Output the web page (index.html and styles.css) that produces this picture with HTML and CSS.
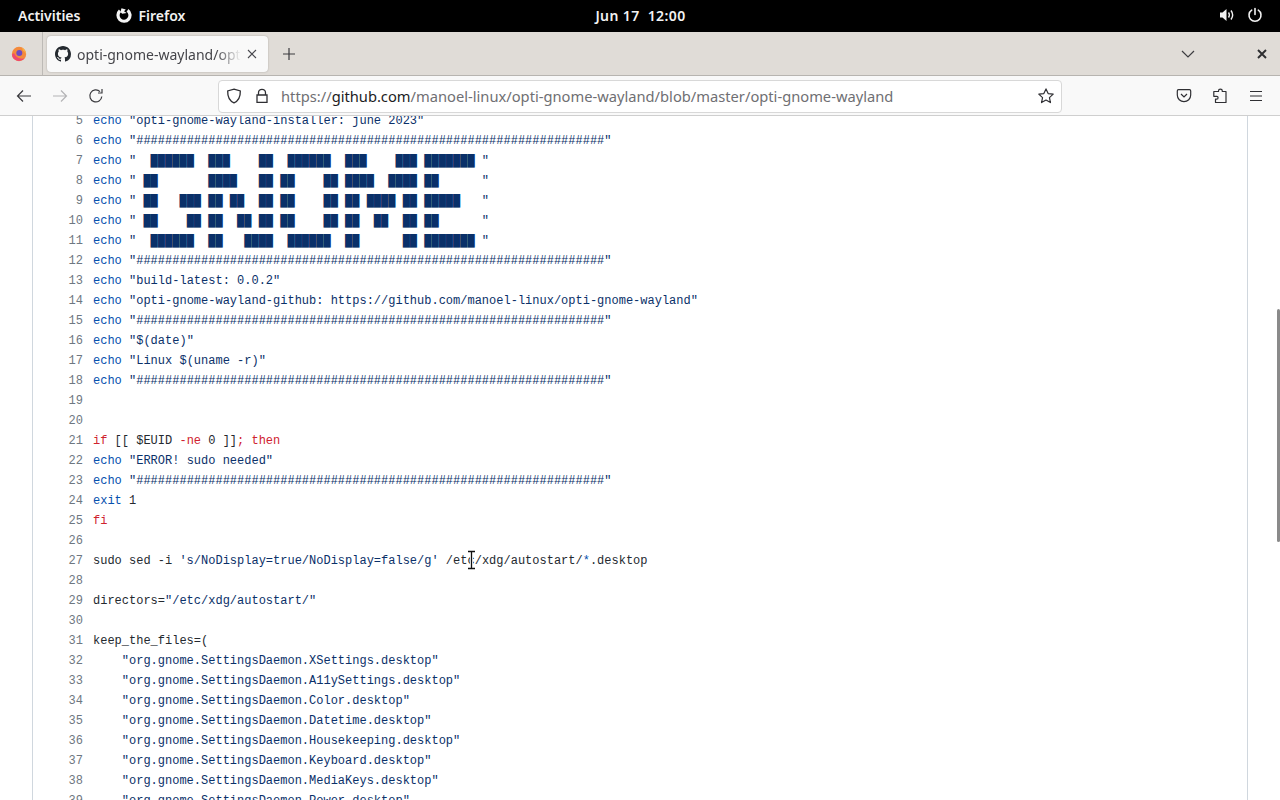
FILE: index.html
```html
<!DOCTYPE html>
<html lang="en">
<head>
<meta charset="utf-8">
<title>opti-gnome-wayland</title>
<link rel="stylesheet" href="styles.css">
</head>
<body>
<header class="topbar">
  <div class="top-left">
    <span class="top-item">Activities</span>
    <span class="top-item app">
      <svg class="ff-mono" viewBox="0 0 16 16" width="16" height="16"><path fill="none" stroke="#f4f4f4" stroke-width="3.200" d="M4 3.800A6 6 0 1 0 11.500 3.400"/><path fill="#f4f4f4" d="M5.500 1.200l4.300 1.300-1.800 1.700 2.600 1.800-4.400.8-1.800-1.900z"/></svg>
      Firefox
    </span>
  </div>
  <div class="clock">Jun 17&nbsp;&nbsp;12:00</div>
  <div class="top-right">
    <svg viewBox="0 0 16 16" width="16" height="16"><path fill="#f2f2f2" d="M1 5.500h2.500L7.500 2v12L3.500 10.500H1z"/><path fill="none" stroke="#f2f2f2" stroke-width="1.400" d="M9.500 5.500c1 1.500 1 3.500 0 5M12 3.500c2 2.700 2 6.300 0 9"/></svg>
    <svg viewBox="0 0 16 16" width="16" height="16"><path fill="none" stroke="#f2f2f2" stroke-width="1.600" stroke-linecap="round" d="M8 1.500v6M4.700 3.200a6 6 0 1 0 6.600 0"/></svg>
  </div>
</header>

<div class="tabbar">
  <div class="ff-view">
    <svg viewBox="0 0 16 16" width="16" height="16"><circle cx="8" cy="8" r="7.200" fill="#f48a3c"/><path fill="#ef4a6e" d="M1 8.500a7.200 7.200 0 0 0 12.800 3.800C9.500 13.500 5 12 3 7z"/><path fill="#fbb040" d="M11 1.500c2.800 1.500 4.200 4 4 6.800-.6-2-1.800-3-3-3.500z"/><circle cx="8.300" cy="6.900" r="3" fill="#6f4bc0"/></svg>
  </div>
  <div class="tab">
    <svg class="gh" viewBox="0 0 16 16" width="16" height="16"><path fill="#24292f" d="M8 0C3.580 0 0 3.580 0 8c0 3.540 2.290 6.530 5.470 7.590.4.070.55-.17.550-.38 0-.19-.01-.82-.01-1.490-2.010.370-2.530-.49-2.690-.94-.09-.23-.48-.94-.82-1.130-.28-.15-.68-.52-.01-.53.630-.01 1.080.58 1.230.82.720 1.210 1.870.870 2.330.660.070-.52.280-.87.510-1.070-1.780-.2-3.640-.89-3.640-3.950 0-.87.310-1.590.820-2.150-.08-.2-.36-1.020.080-2.120 0 0 .67-.21 2.200.820.640-.18 1.320-.27 2-.27.680 0 1.360.09 2 .27 1.530-1.040 2.200-.82 2.200-.82.440 1.100.160 1.920.080 2.120.510.560.820 1.270.820 2.150 0 3.070-1.870 3.750-3.650 3.950.290.250.540.730.540 1.480 0 1.070-.01 1.930-.01 2.200 0 .210.150.460.550.380A8.013 8.013 0 0 0 16 8c0-4.420-3.580-8-8-8z"/></svg>
    <span class="tab-title">opti-gnome-wayland/opti-gnome-wayland</span>
    <svg class="tab-x" viewBox="0 0 10 10" width="10" height="10"><path stroke="#4a4a4f" stroke-width="1.100" d="M1 1l8 8M9 1l-8 8"/></svg>
  </div>
  <svg class="plus" viewBox="0 0 12 12" width="12" height="12"><path stroke="#3a3a3e" stroke-width="1.200" d="M6 0v12M0 6h12"/></svg>
  <div class="tabbar-spacer"></div>
  <svg class="chev" viewBox="0 0 14 8" width="14" height="8"><path fill="none" stroke="#3d3d40" stroke-width="1.200" d="M1 1l6 6 6-6"/></svg>
  <svg class="win-x" viewBox="0 0 10 10" width="10" height="10"><path stroke="#2e2e30" stroke-width="1.900" d="M1 1l8 8M9 1l-8 8"/></svg>
</div>

<nav class="navbar">
  <div class="nav-btns">
    <svg viewBox="0 0 16 16" width="16" height="16"><path fill="none" stroke="#3b3b3f" stroke-width="1.200" d="M15 8H1.500M7 2.500L1.500 8 7 13.500"/></svg>
    <svg viewBox="0 0 16 16" width="16" height="16"><path fill="none" stroke="#b4b4b6" stroke-width="1.200" d="M1 8h13.500M9 2.500L14.500 8 9 13.500"/></svg>
    <svg viewBox="0 0 16 16" width="16" height="16"><path fill="none" stroke="#3b3b3f" stroke-width="1.200" d="M13.800 8.500A6 6 0 1 1 12 3.600M14 1v4h-4"/></svg>
  </div>
  <div class="urlbar">
    <svg viewBox="0 0 16 16" width="16" height="16"><path fill="none" stroke="#2f2f33" stroke-width="1.300" d="M8 1.200l6.300 1.700c.2 5.500-1.500 9.700-6.300 11.900C3.200 12.600 1.500 8.400 1.700 2.900z"/></svg>
    <svg viewBox="0 0 16 16" width="16" height="16"><path fill="none" stroke="#2f2f33" stroke-width="1.300" d="M4.500 7V4.800a3.500 3.500 0 0 1 7 0V7M3 7h10v7.300H3z"/></svg>
    <div class="url"><span class="dim">https://</span>github.com<span class="dim">/manoel-linux/opti-gnome-wayland/blob/master/opti-gnome-wayland</span></div>
    <svg class="star" viewBox="0 0 16 16" width="16" height="16"><path fill="none" stroke="#2f2f33" stroke-width="1.200" stroke-linejoin="round" d="M8 .9l2.150 4.650 5.050.6-3.750 3.450 1 5L8 12.100l-4.450 2.500 1-5L.8 6.150l5.050-.6z"/></svg>
  </div>
  <div class="nav-tools">
    <svg viewBox="0 0 16 16" width="16" height="16"><path fill="none" stroke="#2f2f33" stroke-width="1.200" d="M2.500 1.700h11c.7 0 1.200.5 1.200 1.200V7a6.700 6.700 0 0 1-13.400 0V2.900c0-.7.500-1.200 1.200-1.200zM5 6l3 3 3-3"/></svg>
    <svg viewBox="0 0 16 16" width="16" height="16"><path fill="none" stroke="#2f2f33" stroke-width="1.200" stroke-linejoin="round" d="M6.500 3.500V3c0-2.400 3.800-2.400 3.800 0v.5h3.700v11H3.500v-3.300h1.300c1.700 0 1.700-2.900 0-2.900H1.800V3.500z"/></svg>
    <svg viewBox="0 0 16 16" width="16" height="16"><path stroke="#2f2f33" stroke-width="1.200" d="M2 3.500h12M2 8h12M2 12.500h12"/></svg>
  </div>
</nav>

<main class="page">
  <div class="file-box">
    <table class="code">
      <tbody>
        <tr><td class="num">5</td><td class="line"><span class="k">echo</span> <span class="s">"opti-gnome-wayland-installer: june 2023"</span></td></tr>
        <tr><td class="num">6</td><td class="line"><span class="k">echo</span> <span class="s">"#################################################################"</span></td></tr>
        <tr><td class="num">7</td><td class="line"><span class="k">echo</span> <span class="s">"  ██████  ███    ██  ██████  ███    ███ ███████ "</span></td></tr>
        <tr><td class="num">8</td><td class="line"><span class="k">echo</span> <span class="s">" ██       ████   ██ ██    ██ ████  ████ ██      "</span></td></tr>
        <tr><td class="num">9</td><td class="line"><span class="k">echo</span> <span class="s">" ██   ███ ██ ██  ██ ██    ██ ██ ████ ██ █████   "</span></td></tr>
        <tr><td class="num">10</td><td class="line"><span class="k">echo</span> <span class="s">" ██    ██ ██  ██ ██ ██    ██ ██  ██  ██ ██      "</span></td></tr>
        <tr><td class="num">11</td><td class="line"><span class="k">echo</span> <span class="s">"  ██████  ██   ████  ██████  ██      ██ ███████ "</span></td></tr>
        <tr><td class="num">12</td><td class="line"><span class="k">echo</span> <span class="s">"#################################################################"</span></td></tr>
        <tr><td class="num">13</td><td class="line"><span class="k">echo</span> <span class="s">"build-latest: 0.0.2"</span></td></tr>
        <tr><td class="num">14</td><td class="line"><span class="k">echo</span> <span class="s">"opti-gnome-wayland-github: https://github.com/manoel-linux/opti-gnome-wayland"</span></td></tr>
        <tr><td class="num">15</td><td class="line"><span class="k">echo</span> <span class="s">"#################################################################"</span></td></tr>
        <tr><td class="num">16</td><td class="line"><span class="k">echo</span> <span class="s">"$(date)"</span></td></tr>
        <tr><td class="num">17</td><td class="line"><span class="k">echo</span> <span class="s">"Linux $(uname -r)"</span></td></tr>
        <tr><td class="num">18</td><td class="line"><span class="k">echo</span> <span class="s">"#################################################################"</span></td></tr>
        <tr><td class="num">19</td><td class="line"></td></tr>
        <tr><td class="num">20</td><td class="line"></td></tr>
        <tr><td class="num">21</td><td class="line"><span class="r">if</span> [[ <span class="p">$EUID</span> <span class="r">-ne</span> 0 ]]<span class="r">;</span> <span class="r">then</span></td></tr>
        <tr><td class="num">22</td><td class="line"><span class="k">echo</span> <span class="s">"ERROR! sudo needed"</span></td></tr>
        <tr><td class="num">23</td><td class="line"><span class="k">echo</span> <span class="s">"#################################################################"</span></td></tr>
        <tr><td class="num">24</td><td class="line"><span class="k">exit</span> 1</td></tr>
        <tr><td class="num">25</td><td class="line"><span class="r">fi</span></td></tr>
        <tr><td class="num">26</td><td class="line"></td></tr>
        <tr><td class="num">27</td><td class="line">sudo sed -i <span class="s">'s/NoDisplay=true/NoDisplay=false/g'</span> /etc/xdg/autostart/<span class="k">*</span>.desktop</td></tr>
        <tr><td class="num">28</td><td class="line"></td></tr>
        <tr><td class="num">29</td><td class="line">directors=<span class="s">"/etc/xdg/autostart/"</span></td></tr>
        <tr><td class="num">30</td><td class="line"></td></tr>
        <tr><td class="num">31</td><td class="line">keep_the_files=(</td></tr>
        <tr><td class="num">32</td><td class="line">    <span class="s">"org.gnome.SettingsDaemon.XSettings.desktop"</span></td></tr>
        <tr><td class="num">33</td><td class="line">    <span class="s">"org.gnome.SettingsDaemon.A11ySettings.desktop"</span></td></tr>
        <tr><td class="num">34</td><td class="line">    <span class="s">"org.gnome.SettingsDaemon.Color.desktop"</span></td></tr>
        <tr><td class="num">35</td><td class="line">    <span class="s">"org.gnome.SettingsDaemon.Datetime.desktop"</span></td></tr>
        <tr><td class="num">36</td><td class="line">    <span class="s">"org.gnome.SettingsDaemon.Housekeeping.desktop"</span></td></tr>
        <tr><td class="num">37</td><td class="line">    <span class="s">"org.gnome.SettingsDaemon.Keyboard.desktop"</span></td></tr>
        <tr><td class="num">38</td><td class="line">    <span class="s">"org.gnome.SettingsDaemon.MediaKeys.desktop"</span></td></tr>
        <tr><td class="num">39</td><td class="line">    <span class="s">"org.gnome.SettingsDaemon.Power.desktop"</span></td></tr>
      </tbody>
    </table>
  </div>
  <div class="scroll-thumb"></div>
  <svg class="ibeam" viewBox="0 0 9 20" width="9" height="20"><path fill="none" stroke="#fff" stroke-width="3" d="M1 1h7M4.500 1v18M1 19h7"/><path fill="none" stroke="#111" stroke-width="1.300" d="M1 1.500h7M4.500 1.500v17M1 18.500h7"/></svg>
</main>
</body>
</html>
```
FILE: styles.css
```css
* { box-sizing: border-box; }
html, body { margin: 0; padding: 0; height: 800px; overflow: hidden; background: #fff; }
body { display: flex; flex-direction: column; font-family: "Noto Sans", "Open Sans", sans-serif; }
svg { display: block; flex: none; }

.topbar {
  height: 32px; flex: none; background: #000; color: #f2f2f2;
  display: grid; grid-template-columns: 1fr auto 1fr; align-items: center;
  font-size: 14px; font-weight: 600; padding: 0 17px 2px 18px;
}
.top-left { display: flex; align-items: center; gap: 36px; }
.top-item.app { display: flex; align-items: center; gap: 6px; }
.clock { letter-spacing: .4px; }
.top-right { display: flex; justify-content: flex-end; align-items: center; gap: 12px; padding-right: 0; }

.tabbar {
  height: 44px; flex: none; background: #e0dcd7; border-bottom: 1px solid #b7b4b0;
  display: flex; align-items: center;
}
.ff-view {
  width: 43px; height: 43px; display: flex; align-items: center; justify-content: center;
  border-right: 1px solid #bdbab6; padding-right: 5px;
}
.tab {
  margin-left: 4px; width: 221px; height: 36px; background: #f9f9f9; border-radius: 4px;
  box-shadow: 0 0 2px rgba(0,0,0,.25);
  display: flex; align-items: center; padding: 0 11px 0 8px; gap: 6px; font-size: 14px; color: #45454a;
}
.tab-title {
  flex: 1; white-space: nowrap; overflow: hidden; padding-top: 1px;
  -webkit-mask-image: linear-gradient(to right, #000 85%, transparent 100%);
  mask-image: linear-gradient(to right, #000 85%, transparent 100%);
}
.plus { margin-left: 15px; }
.tabbar-spacer { flex: 1; }
.chev { margin-right: 62px; }
.win-x { margin-right: 13px; }

.navbar {
  height: 40px; flex: none; background: #f9f9f9; border-bottom: 1px solid #cfcfcf;
  display: flex; align-items: center; padding-top: 1px;
}
.nav-btns { display: flex; align-items: center; gap: 20px; padding-left: 16px; width: 218px; }
.urlbar {
  width: 844px; height: 33px; background: #fff; border: 1px solid #d8d8d8; border-radius: 4px;
  display: flex; align-items: center; padding: 0 7px 0 7px; gap: 12px;
}
.url { flex: 1; font-size: 14.7px; color: #1c1c1e; white-space: nowrap; overflow: hidden; margin-left: -1px; }
.dim { color: #6f6f73; }
.nav-tools { display: flex; align-items: center; gap: 20px; padding-left: 114px; }

.page { flex: 1; position: relative; overflow: hidden; background: #fff; padding: 0 32px; min-height: 0; }
.file-box { width: 1216px; height: 800px; margin-top: -5px; border: 1px solid #d0d7de; border-width: 0 1px; }
.code { border-collapse: collapse; font-family: "Liberation Mono", monospace; font-size: 12px; line-height: 20px; }
.code td { padding: 0; height: 20px; white-space: pre; }
.num { width: 60px; text-align: right; color: #6e7781; }
.line { color: #24292f; }
.code td.num { padding-right: 10px; }
.k { color: #0550ae; }
.s { color: #0a3069; }
.r { color: #cf222e; }
.p { color: #24292f; }
.scroll-thumb { position: absolute; right: 0; top: 193px; width: 3px; height: 233px; background: #8a8a8a; border-radius: 2px; }
.ibeam { position: absolute; left: 467px; top: 434px; }
```
